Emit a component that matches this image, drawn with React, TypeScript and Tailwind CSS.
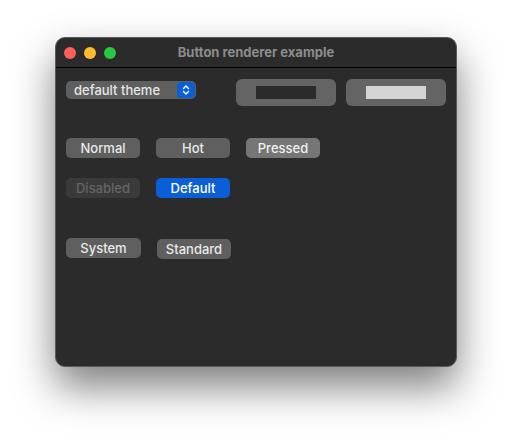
import React from "react";

const font = { fontFamily: "Inter, 'Noto Sans', sans-serif" };

const Btn = ({ label, className = "" }: { label: string; className?: string }) => (
  <div
    className={`w-[74px] h-[20px] rounded-[5px] flex items-center justify-center text-[13px] font-medium leading-none ${className}`}
  >
    {label}
  </div>
);

const App = () => {
  return (
    <div className="w-[512px] h-[440px] bg-white pl-[55px] pt-[37px]" style={font}>
      <div className="w-[402px] h-[330px] rounded-[10px] bg-[#2b2b2b] border border-[#5a5a5a] shadow-[0_20px_40px_rgba(0,0,0,0.5)] flex flex-col overflow-hidden">
        <div className="h-[30px] flex items-center relative border-b border-black shrink-0">
          <div className="flex gap-[8px] pl-[8px]">
            <div className="w-[12px] h-[12px] rounded-full bg-[#fe5f57]" />
            <div className="w-[12px] h-[12px] rounded-full bg-[#febc2e]" />
            <div className="w-[12px] h-[12px] rounded-full bg-[#28c840]" />
          </div>
          <div className="absolute inset-0 flex items-center justify-center text-[13px] font-bold text-[#8c8c8c]">
            Button renderer example
          </div>
        </div>

        <div className="flex flex-col pl-[10px] pr-[9px]">
          <div className="flex items-start mt-[11px]">
            <div className="mt-[2px] w-[130px] h-[18px] rounded-[5px] bg-[#5f5f5f] flex items-center justify-between pl-[8px] pr-[1px]">
              <span className="text-[13px] font-medium text-[#e6e6e6] leading-none">default theme</span>
              <div className="w-[18px] h-[16px] rounded-[4px] bg-[#0a5fd6] flex items-center justify-center">
                <svg width="8" height="12" viewBox="0 0 8 12" fill="none" stroke="white" strokeWidth="1.4" strokeLinecap="round" strokeLinejoin="round">
                  <path d="M1.5 4.5 L4 2 L6.5 4.5" />
                  <path d="M1.5 7.5 L4 10 L6.5 7.5" />
                </svg>
              </div>
            </div>
            <div className="ml-[40px] w-[100px] h-[27px] rounded-[6px] bg-[#646464] flex items-center justify-center">
              <div className="w-[60px] h-[13px] bg-[#2b2b2b]" />
            </div>
            <div className="ml-[10px] w-[100px] h-[27px] rounded-[6px] bg-[#646464] flex items-center justify-center">
              <div className="w-[60px] h-[13px] bg-[#d4d4d4]" />
            </div>
          </div>

          <div className="flex gap-[16px] mt-[32px]">
            <Btn label="Normal" className="bg-[#5f5f5f] text-[#e8e8e8]" />
            <Btn label="Hot" className="bg-[#5f5f5f] text-[#e8e8e8]" />
            <Btn label="Pressed" className="bg-[#767676] text-[#f0f0f0]" />
          </div>

          <div className="flex gap-[16px] mt-[20px]">
            <Btn label="Disabled" className="bg-[#3a3a3a] text-[#656565]" />
            <Btn label="Default" className="bg-[#0a5fd6] text-white" />
          </div>

          <div className="flex gap-[16px] mt-[40px] items-start">
            <Btn label="System" className="w-[75px] h-[19px] bg-[#5f5f5f] text-[#e8e8e8]" />
            <Btn label="Standard" className="mt-[1px] w-[73px] bg-[#5f5f5f] text-[#e8e8e8]" />
          </div>
        </div>
      </div>
    </div>
  );
};

export default App;
